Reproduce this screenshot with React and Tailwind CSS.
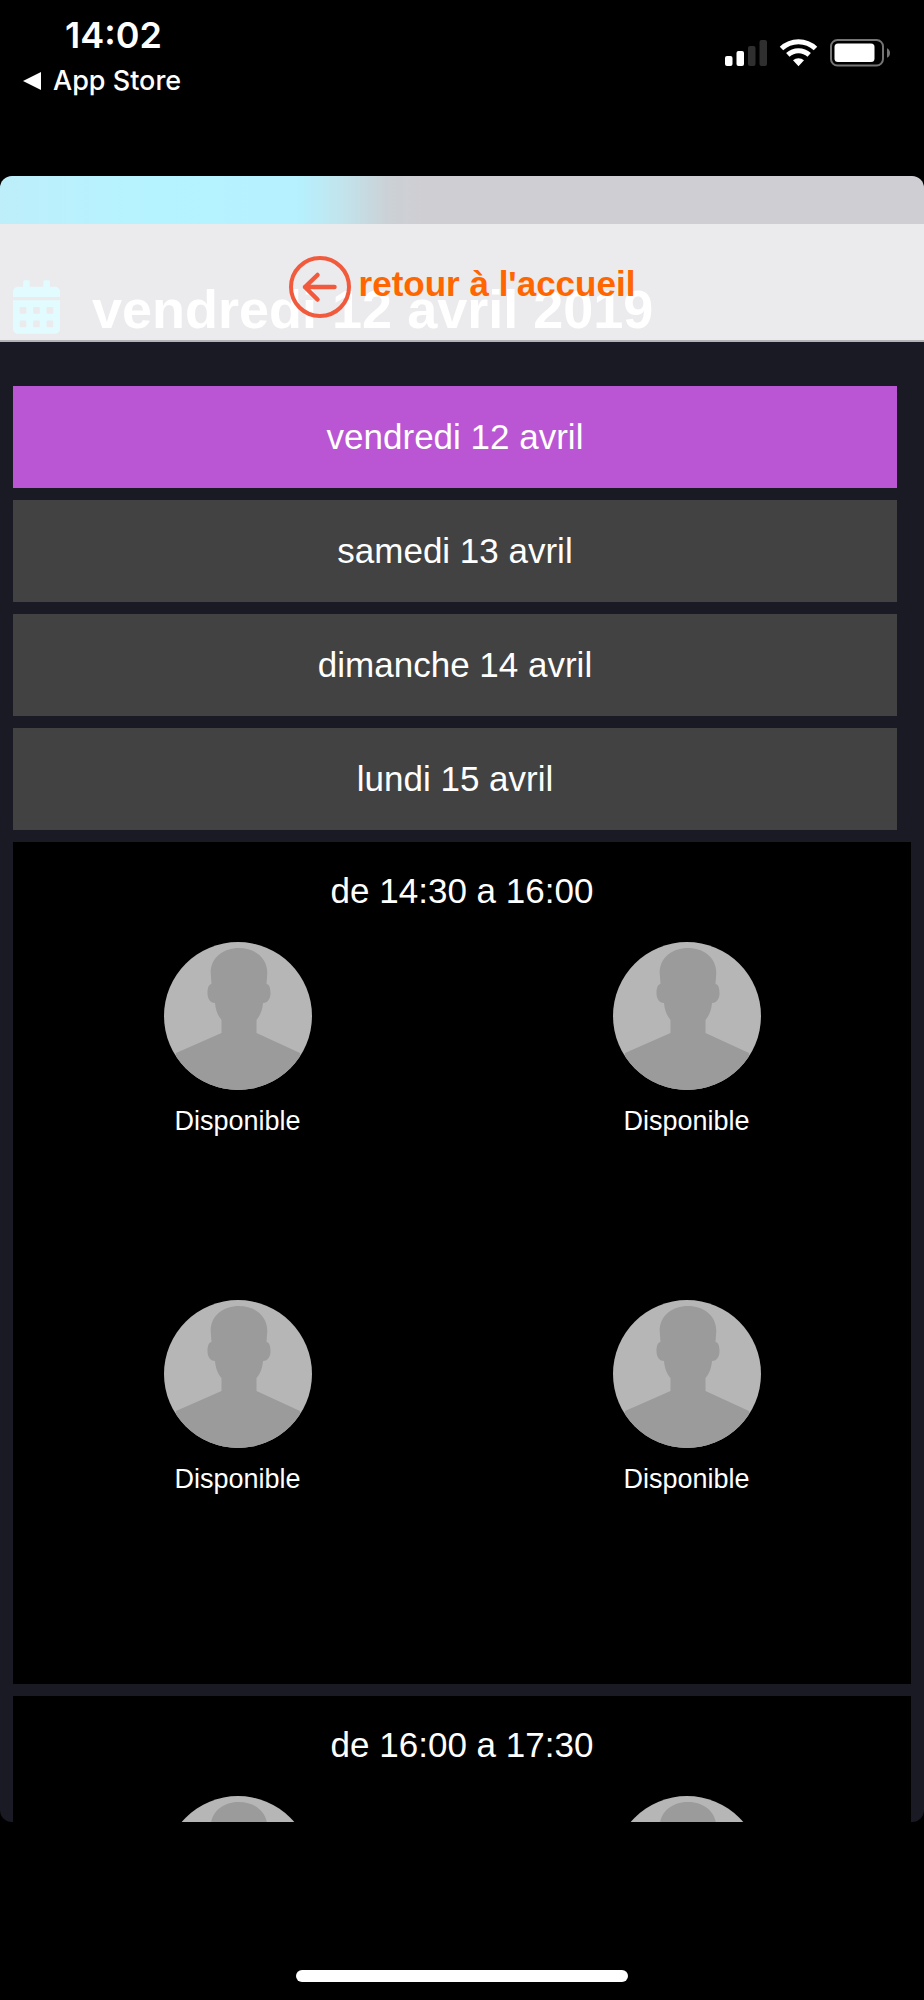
import React, { useState } from "react";
import { FaCalendarAlt } from "react-icons/fa";

const days = [
  "vendredi 12 avril",
  "samedi 13 avril",
  "dimanche 14 avril",
  "lundi 15 avril",
];

const slots = [
  { id: 1, from: "14:30", to: "16:00", places: 4 },
  { id: 2, from: "16:00", to: "17:30", places: 4 },
];

const StatusIcons = () => (
  <svg viewBox="0 0 168 30" className="w-42 h-[30px]" aria-hidden="true">
    {/* Signal */}
    <rect x="1" y="18" width="7.5" height="10" rx="2" fill="#fff" />
    <rect x="12.5" y="13" width="7.5" height="15" rx="2" fill="#fff" />
    <rect x="24" y="8" width="7.5" height="20" rx="2" fill="#2f2f2f" />
    <rect x="35.5" y="2" width="7.5" height="26" rx="2" fill="#2f2f2f" />
    {/* Wifi */}
    <g fill="none" stroke="#fff" strokeWidth="5">
      <path d="M57.5 10.5a24.5 24.5 0 0 1 34 0" />
      <path d="M63.8 16.8a15.8 15.8 0 0 1 21.4 0" />
    </g>
    <path d="M69 22.2a8.5 8.5 0 0 1 11 0l-5.5 6z" fill="#fff" />
    {/* Battery */}
    <rect x="107" y="2" width="52" height="25.5" rx="6.5" fill="none" stroke="#757575" strokeWidth="2" />
    <rect x="110.5" y="5.5" width="40" height="18.5" rx="3.5" fill="#fff" />
    <path d="M163 10.2c4 1.6 4 8 0 9.6z" fill="#757575" />
  </svg>
);

const Avatar = () => (
  <svg viewBox="0 0 148 148" className="w-37 h-37 rounded-full bg-[#b6b6b6]" aria-hidden="true">
    <path
      d="M47.5 42L46.7 31C46.7 15 60 6 75 6s28.3 9 28.3 25l-.8 11c2.5 0 4 3.5 4 9s-2.500 10-7.500 10c-.5 7-3 13-6.500 17v13L136 111v37H12v-37l45.500-20V78C54 74 51.500 68 51 61c-5 0-7.500-4.500-7.500-10s1.500-9 4-9z"
      fill="#9b9b9b"
    />
  </svg>
);

const BackIcon = () => (
  <svg viewBox="0 0 62 62" className="w-[62px] h-[62px]" aria-hidden="true">
    <g fill="none" stroke="#f15a3c" strokeLinecap="round" strokeLinejoin="round">
      <circle cx="31" cy="31" r="29" strokeWidth="4" />
      <path d="M45.500 31H16M28.500 19L16 31l12.500 12.500" strokeWidth="4.500" />
    </g>
  </svg>
);

const StatusBar = () => (
  <div className="flex h-44 shrink-0 items-start justify-between pl-[23px] pr-8 font-['Inter',sans-serif] text-white">
    <div>
      <p className="mt-3 pl-[42px] text-[36px] leading-[46px] font-semibold">14:02</p>
      <a href="#" className="flex items-center gap-3 text-[27px] leading-[46px] font-medium">
        <svg viewBox="0 0 18 18" className="w-4.5 h-4.5" aria-hidden="true">
          <path d="M0 9L18 0v18z" fill="#fff" />
        </svg>
        App Store
      </a>
    </div>
    <div className="mt-[38px]">
      <StatusIcons />
    </div>
  </div>
);

const Slot = ({ slot }) => (
  <section className="bg-black pt-[30px] pb-[26px]">
    <h2 className="text-center text-[35px] leading-[38px]">
      de {slot.from} a {slot.to}
    </h2>
    <div className="mt-8 grid grid-cols-2">
      {Array.from({ length: slot.places }).map((_, index) => (
        <div key={index} className="flex h-[358px] items-start justify-center">
          <button className="flex cursor-pointer flex-col items-center gap-3 text-[27px] leading-[38px]">
            <Avatar />
            Disponible
          </button>
        </div>
      ))}
    </div>
  </section>
);

const App = () => {
  const [selectedDay, setSelectedDay] = useState(0);

  return (
    <div className="flex h-screen flex-col bg-black font-['Liberation_Sans',Arial,sans-serif]">
      <StatusBar />

      <main className="min-h-0 flex-1 overflow-hidden rounded-xl bg-[#1a1a24] text-white">
        <div className="h-12 bg-[linear-gradient(to_right,#bdeefa,#b6f3ff_14%,#b5f1ff_32%,#c2e4ec_37%,#cbd1d6_42%,#cfced3_46%)]" />

        <header className="relative border-b-2 border-[#b4b4b6] bg-[#ebebed] pt-14 pb-0.5">
          <div className="flex items-start gap-8 pl-[13px]">
            <FaCalendarAlt className="h-[54px] w-[47px] text-[#e2fbff]" />
            <h1 className="text-[54px] leading-[58px] font-bold">vendredi 12 avril 2019</h1>
          </div>
          {/* Back link lies over the date */}
          <div className="absolute inset-0 flex items-start justify-center pt-8">
            <a href="#" className="flex items-center gap-2 text-[35px] leading-[38px] font-bold text-[#ff6600]">
              <BackIcon />
              <span className="pb-1.5">retour à l'accueil</span>
            </a>
          </div>
        </header>

        <div className="flex flex-col gap-3 px-[13px] pt-11">
          {days.map((day, index) => (
            <button
              key={day}
              onClick={() => setSelectedDay(index)}
              className={`mr-3.5 cursor-pointer py-8 text-[35px] leading-[38px] ${
                selectedDay === index ? "bg-[#ba55d3]" : "bg-[#424242]"
              }`}
            >
              {day}
            </button>
          ))}
          {slots.map((slot) => (
            <Slot key={slot.id} slot={slot} />
          ))}
        </div>
      </main>

      <footer className="flex h-[178px] shrink-0 items-end justify-center pb-[18px]">
        <div className="h-3 w-[36%] rounded-full bg-white" />
      </footer>
    </div>
  );
};

export default App;
